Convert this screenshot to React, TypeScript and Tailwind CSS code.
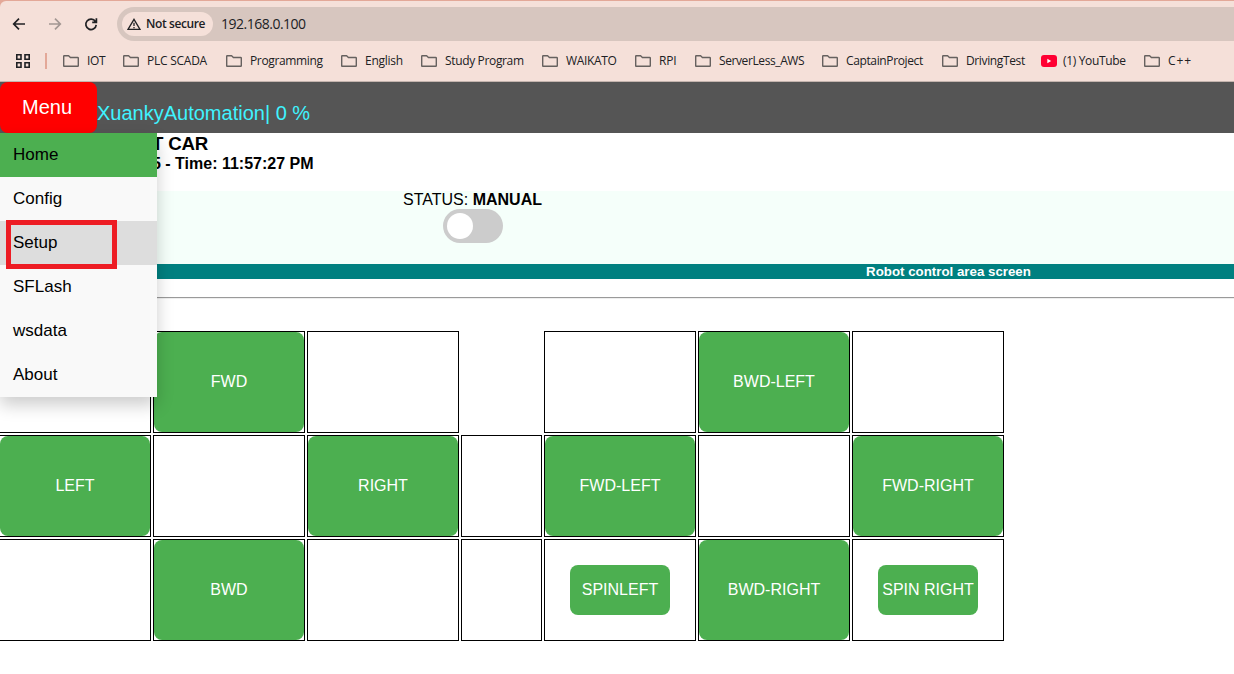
import React from "react";

const folder = (
  <svg width="16" height="12" viewBox="0 0 16 12" fill="none" stroke="#66615f" strokeWidth="1.4" strokeLinejoin="round" className="shrink-0">
    <path d="M.7 1.3Q.7.7 1.3.7H5.6L7.4 2.5H14.6Q15.3 2.5 15.3 3.1V10.7Q15.3 11.3 14.7 11.3H1.3Q.7 11.3.7 10.7Z" />
  </svg>
);
const youtube = (
  <svg width="16" height="12" viewBox="0 0 16 12" className="shrink-0">
    <rect width="16" height="12" rx="3" fill="#ff0033" />
    <path d="M6.3 3.8V8.2L10.2 6Z" fill="#fff" />
  </svg>
);

const bookmarks = [
  { label: "IOT", box: "w-[60px]", text: "tracking-[-0.3px]" },
  { label: "PLC SCADA", box: "w-[103px]", text: "tracking-[-0.25px]" },
  { label: "Programming", box: "w-[115px]", text: "tracking-[-0.35px]" },
  { label: "English", box: "w-[80px]", text: "tracking-[-0.25px]" },
  { label: "Study Program", box: "w-[121px]", text: "tracking-[-0.35px]" },
  { label: "WAIKATO", box: "w-[93px]", text: "tracking-[-0.35px]" },
  { label: "RPI", box: "w-[60px]", text: "tracking-[-0.2px]" },
  { label: "ServerLess_AWS", box: "w-[127px]", text: "tracking-[-0.4px]" },
  { label: "CaptainProject", box: "w-[120px]", text: "tracking-[-0.37px]" },
  { label: "DrivingTest", box: "w-[99px]", text: "tracking-[-0.37px]" },
  { label: "(1) YouTube", box: "w-[103px]", text: "tracking-[-0.33px]", yt: true },
  { label: "C++", box: "w-[60px]", text: "tracking-[0.9px]" },
];

const menu = [
  { label: "Home", bg: "bg-[#4caf50]" },
  { label: "Config", bg: "" },
  { label: "Setup", bg: "bg-[#ddd]", marked: true },
  { label: "SFLash", bg: "" },
  { label: "wsdata", bg: "" },
  { label: "About", bg: "" },
];

type Cell = string | null;
const cells: Cell[] = [
  "", "FWD", "", null, "", "BWD-LEFT", "",
  "LEFT", "", "RIGHT", "", "FWD-LEFT", "", "FWD-RIGHT",
  "", "BWD", "", "", "SPINLEFT", "BWD-RIGHT", "SPIN RIGHT",
];

function Browser() {
  return (
    <header className="h-[82px] bg-[#e3a898] pt-px text-[#202124]">
      <div className="h-[81px] rounded-tl-md border-b border-[#c4b4ae] bg-[#f5e0d9]">
        <div className="flex h-[46px] items-center">
          <svg width="117" height="46" viewBox="0 0 117 46" fill="none" strokeWidth="1.7" className="shrink-0">
            <path d="M25 23H14M19 17.7L13.7 23L19 28.3" stroke="#202124" />
            <path d="M49 23H60M55 17.7L60.3 23L55 28.3" stroke="#a39793" />
            <path d="M95.4 20.5A5.2 5.2 0 1 0 96.2 23.8M96.4 17.3V21.4H92.2" stroke="#202124" />
          </svg>
          <div className="flex h-[34px] flex-1 items-center rounded-l-full bg-[#d7c6bf] pl-[5px]">
            <div className="flex h-6 w-[91px] items-center rounded-full bg-[#f5e0d9] pl-[5px]">
              <svg width="14" height="13" viewBox="0 0 14 13" fill="none" stroke="#202124" strokeWidth="1.3" className="shrink-0">
                <path d="M7 1.3L13 11.3H1ZM7 4.8V8M7 8.9V10.2" />
              </svg>
              <span className="ml-[5px] whitespace-nowrap font-['Open_Sans',sans-serif] text-[12px] font-semibold tracking-[-0.4px]">Not secure</span>
            </div>
            <span className="ml-[8px] pb-px font-['Open_Sans',sans-serif] text-[14px] tracking-[-0.5px]">192.168.0.100</span>
          </div>
        </div>
        <nav className="flex h-[28px] items-center whitespace-nowrap font-['Open_Sans',sans-serif] text-[12px]">
          <svg width="63" height="28" viewBox="0 0 63 28" fill="none" className="shrink-0">
            <path d="M16.8 7.8H21V12.2H16.8ZM25 7.8H29.2V12.2H25ZM16.8 15.8H21V20.2H16.8ZM25 15.8H29.2V20.2H25Z" stroke="#202124" strokeWidth="1.6" />
            <path d="M46 6V22" stroke="#e3a898" strokeWidth="2" />
          </svg>
          {bookmarks.map((b) => (
            <div key={b.label} className={`flex shrink-0 items-center ${b.box}`}>
              {b.yt ? youtube : folder}
              <span className={b.yt ? `ml-[6px] ${b.text}` : `ml-[8px] ${b.text}`}>{b.label}</span>
            </div>
          ))}
        </nav>
      </div>
    </header>
  );
}

function NavBar() {
  return (
    <div className="relative z-10 flex h-[51px] bg-[#555]">
      <div className="relative">
        <button className="flex h-[51px] w-[97px] items-center rounded-lg bg-[#f00] pb-[2px] pl-[22px] text-[20px] text-white">Menu</button>
        <div className="absolute top-[51px] left-0 w-[157px] bg-[#f9f9f9] shadow-[0px_8px_16px_0px_rgba(0,0,0,0.2)]">
          {menu.map((m) => (
            <div key={m.label} className={`relative flex h-[44px] items-center pl-[13px] text-[17px] leading-[20px] text-black ${m.bg}`}>
              {m.label}
              {m.marked && <div className="absolute top-[-1px] left-[6px] h-[49px] w-[111px] border-[5px] border-[#ed1c24]" />}
            </div>
          ))}
        </div>
      </div>
      <span className="pt-[16px] text-[20px] leading-[30px] whitespace-nowrap text-[#3ff3ff]">XuankyAutomation| 0 %</span>
    </div>
  );
}

export default function App() {
  return (
    <div className="h-[674px] w-full overflow-hidden bg-white font-['Liberation_Sans',Arial,sans-serif] text-black">
      <Browser />
      <NavBar />
      <div className="h-[58px] pl-[152px] font-bold">
        <div className="h-[21px] text-[18.7px] leading-[21px] tracking-[-0.2px]">T CAR</div>
        <div className="text-[16px] leading-[19px]">5 - Time: 11:57:27 PM</div>
      </div>
      <section className="flex h-[73px] w-[1896px] bg-[#f5fffa]">
        <div className="flex w-[945px] flex-col items-center">
          <div className="h-[18px] text-[16px] leading-[18px]">STATUS: <b>MANUAL</b></div>
          <div className="flex h-[34px] w-[60px] items-center rounded-full bg-[#ccc] pl-[4px]">
            <div className="size-[26px] rounded-full bg-white" />
          </div>
        </div>
      </section>
      <div className="h-[15px] w-[1897px] bg-[#008080] text-center text-[13.3px] leading-[15px] font-bold text-white">Robot control area screen</div>
      <hr className="mt-[18px] h-[2px] border-t border-b border-t-[#9a9a9a] border-b-[#eee]" />
      <div className="mt-[32px] -ml-px grid grid-cols-[152px_152px_152px_81px_152px_152px_152px] grid-rows-[102px_102px_102px] gap-[2px]">
        {cells.map((c, i) =>
          c === null ? (
            <div key={i} />
          ) : (
            <div key={i} className="flex items-center justify-center border border-black">
              {c && (
                <button className={c.startsWith("SPIN") ? "h-[50px] w-[100px] rounded-lg bg-[#4caf50] text-[16px] whitespace-nowrap text-white" : "h-full w-full rounded-lg bg-[#4caf50] text-[16px] text-white"}>
                  {c}
                </button>
              )}
            </div>
          )
        )}
      </div>
    </div>
  );
}
